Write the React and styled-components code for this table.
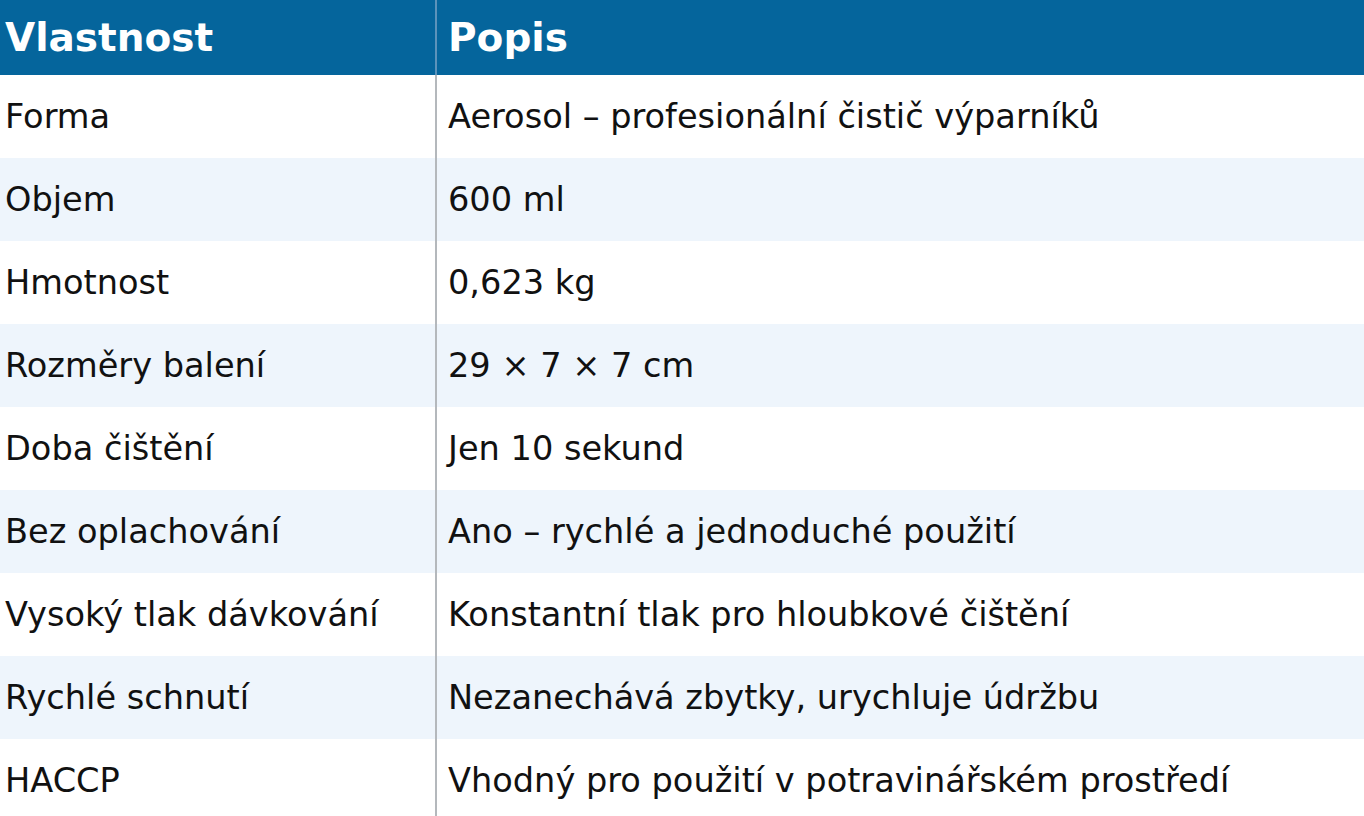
import styled, { createGlobalStyle } from 'styled-components';

const GlobalStyle = createGlobalStyle`
  html, body {
    margin: 0;
    padding: 0;
    background: #ffffff;
  }
  body {
    font-family: "DejaVu Sans", "Noto Sans", sans-serif;
    color: #111111;
  }
`;

const Table = styled.table`
  width: 1364px;
  border-collapse: collapse;
  table-layout: fixed;
`;

const HeadCell = styled.th`
  height: 75px;
  padding: 0 0 0 ${({ $first }) => ($first ? '5px' : '11px')};
  background: #05659c;
  color: #ffffff;
  font-size: 39px;
  font-weight: 700;
  text-align: left;
  vertical-align: middle;
  box-sizing: border-box;
  border-right: ${({ $first }) => ($first ? '2px solid #5c93bb' : 'none')};
  width: ${({ $first }) => ($first ? '436px' : 'auto')};
`;

const Row = styled.tr`
  background: ${({ $alt }) => ($alt ? '#eef5fc' : '#ffffff')};
`;

const Cell = styled.td`
  height: 83px;
  padding: 0 0 0 ${({ $first }) => ($first ? '5px' : '11px')};
  font-size: 33.6px;
  line-height: 1;
  vertical-align: middle;
  box-sizing: border-box;
  white-space: nowrap;
  border-right: ${({ $first }) => ($first ? '2px solid #b4b8bc' : 'none')};
`;

const rows = [
  ['Forma', 'Aerosol – profesionální čistič výparníků'],
  ['Objem', '600 ml'],
  ['Hmotnost', '0,623 kg'],
  ['Rozměry balení', '29 × 7 × 7 cm'],
  ['Doba čištění', 'Jen 10 sekund'],
  ['Bez oplachování', 'Ano – rychlé a jednoduché použití'],
  ['Vysoký tlak dávkování', 'Konstantní tlak pro hloubkové čištění'],
  ['Rychlé schnutí', 'Nezanechává zbytky, urychluje údržbu'],
  ['HACCP', 'Vhodný pro použití v potravinářském prostředí'],
];

export default function App() {
  return (
    <>
      <GlobalStyle />
      <Table>
        <thead>
          <tr>
            <HeadCell $first>Vlastnost</HeadCell>
            <HeadCell>Popis</HeadCell>
          </tr>
        </thead>
        <tbody>
          {rows.map(([name, desc], i) => (
            <Row key={name} $alt={i % 2 === 1}>
              <Cell $first>{name}</Cell>
              <Cell>{desc}</Cell>
            </Row>
          ))}
        </tbody>
      </Table>
    </>
  );
}
